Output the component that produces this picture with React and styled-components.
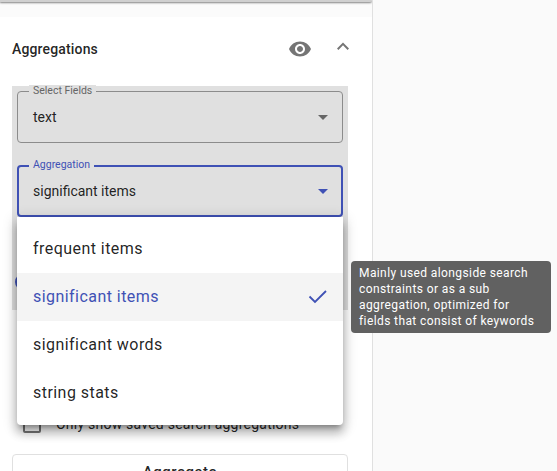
import React from 'react'
import styled, {createGlobalStyle} from 'styled-components'

const GlobalStyle = createGlobalStyle`
  html, body {
    margin: 0;
    height: 100%;
    overflow: hidden;
    background: #fafafa;
    font-family: Roboto, "Liberation Sans", sans-serif;
  }
`;

const Page = styled.div`
  position: relative;
  width: 557px;
  height: 471px;
  overflow: hidden;
  display: flex;
`;

const Sidebar = styled.div`
  width: 373px;
  height: 471px;
  flex: none;
  box-sizing: border-box;
  border-right: 1px solid #e0e0e0;
  background: #fbfbfb;
  overflow: hidden;
`;

const TopCard = styled.div`
  height: 2px;
  background: #d0d0d0;
  border-radius: 0 0 4px 0;
  box-shadow: 0 1px 2px rgba(0, 0, 0, 0.5);
  margin-bottom: 15px;
`;

const Panel = styled.div`
  background: #fff;
  padding: 0 17px 0 12px;
  height: 454px;
`;

const PanelHeader = styled.div`
  display: flex;
  align-items: center;
  height: 64px;
`;

const PanelTitle = styled.h2`
  flex: 1;
  margin: 0;
  font-size: 14px;
  font-weight: 500;
  letter-spacing: 0.15px;
  color: rgba(0, 0, 0, 0.87);
`;

const IconSlot = styled.div`
  display: flex;
  margin-left: ${(props) => props.gap || 0}px;
  color: #757575;
`;

const DisabledArea = styled.div`
  background: #e0e0e0;
  margin-top: 5px;
  height: 224px;
  padding: 5px;
  width: 336px;
  box-sizing: border-box;
`;

const Field = styled.div`
  position: relative;
  height: 52px;
  box-sizing: border-box;
  border: ${(props) => (props.focused ? '2px solid #3f51b5' : '1px solid #8c8c8c')};
  border-radius: 4px;
  margin-bottom: 22px;
  display: flex;
  align-items: center;
  justify-content: space-between;
  padding: 0 ${(props) => (props.focused ? 13 : 14)}px 0 ${(props) => (props.focused ? 14 : 15)}px;
`;

const FieldLabel = styled.span`
  position: absolute;
  top: ${(props) => (props.focused ? -8 : -7)}px;
  left: ${(props) => (props.focused ? 10 : 11)}px;
  padding: 0 4px;
  background: #e0e0e0;
  font-size: 10.5px;
  line-height: 12px;
  color: ${(props) => (props.focused ? '#3f51b5' : '#666')};
`;

const FieldValue = styled.span`
  font-size: 14px;
  color: rgba(0, 0, 0, 0.87);
`;

const Caret = styled.span`
  width: 0;
  height: 0;
  border-left: 5px solid transparent;
  border-right: 5px solid transparent;
  border-top: 5px solid ${(props) => props.color};
`;

const RadioHint = styled.div`
  position: absolute;
  left: 15px;
  top: 273px;
  width: 18px;
  height: 18px;
  border-radius: 50%;
  background: #3f51b5;
`;

const CheckRow = styled.div`
  display: flex;
  align-items: center;
  margin: 105px 0 0 11px;
  height: 18px;
`;

const CheckBox = styled.span`
  width: 14px;
  height: 14px;
  flex: none;
  border: 2px solid #757575;
  border-radius: 2px;
`;

const CheckLabel = styled.span`
  margin-left: 15px;
  font-size: 14px;
  letter-spacing: 0.23px;
  color: rgba(0, 0, 0, 0.87);
`;

const AggregateButton = styled.button`
  display: block;
  width: 336px;
  height: 44px;
  margin-top: 21px;
  padding: 0 0 8px;
  background: #fff;
  border: 1px solid #e0e0e0;
  border-radius: 4px;
  font-family: inherit;
  font-size: 15px;
  font-weight: 500;
  letter-spacing: 0.5px;
  color: rgba(0, 0, 0, 0.87);
`;

const Menu = styled.ul`
  position: absolute;
  left: 17px;
  top: 217px;
  width: 326px;
  margin: 0;
  padding: 8px 0;
  list-style: none;
  background: #fff;
  border-radius: 0 0 4px 4px;
  box-shadow: 0 5px 5px -3px rgba(0, 0, 0, 0.3), 0 8px 10px 1px rgba(0, 0, 0, 0.2), 0 3px 14px 2px rgba(0, 0, 0, 0.16);
`;

const MenuItem = styled.li`
  display: flex;
  align-items: center;
  justify-content: space-between;
  height: 48px;
  box-sizing: border-box;
  padding: 0 14px 2px 16px;
  font-size: 16px;
  letter-spacing: 0.45px;
  background: ${(props) => (props.selected ? '#f4f4f4' : 'transparent')};
  color: ${(props) => (props.selected ? '#3f51b5' : 'rgba(0, 0, 0, 0.87)')};
`;

const Tooltip = styled.div`
  position: absolute;
  left: 351px;
  top: 261px;
  width: 200px;
  height: 72px;
  box-sizing: border-box;
  padding: 4px 8px;
  background: #616161;
  border-radius: 4px;
  color: #fff;
  font-size: 12px;
  line-height: 16px;
  letter-spacing: 0.4px;
`;

const items = ['frequent items', 'significant items', 'significant words', 'string stats']

const App = () => (
  <Page>
    <GlobalStyle/>
    <Sidebar>
      <TopCard/>
      <Panel>
        <PanelHeader>
          <PanelTitle>Aggregations</PanelTitle>
          <IconSlot>
            <svg width="24" height="24" viewBox="0 0 24 24" fill="currentColor">
              <path d="M12 4.5C7 4.5 2.73 7.61 1 12c1.73 4.39 6 7.5 11 7.5s9.27-3.11 11-7.5c-1.73-4.39-6-7.5-11-7.5zM12 17c-2.76 0-5-2.24-5-5s2.24-5 5-5 5 2.24 5 5-2.24 5-5 5zm0-8c-1.66 0-3 1.34-3 3s1.34 3 3 3 3-1.34 3-3-1.34-3-3-3z"/>
            </svg>
          </IconSlot>
          <IconSlot gap={19}>
            <svg width="24" height="24" viewBox="0 0 24 24" fill="currentColor">
              <path d="M12 5.5l-6 6 1.41 1.41L12 8.33l4.59 4.58L18 11.5z"/>
            </svg>
          </IconSlot>
        </PanelHeader>
        <DisabledArea>
          <Field>
            <FieldLabel>Select Fields</FieldLabel>
            <FieldValue>text</FieldValue>
            <Caret color="#666"/>
          </Field>
          <Field focused>
            <FieldLabel focused>Aggregation</FieldLabel>
            <FieldValue>significant items</FieldValue>
            <Caret color="#3f51b5"/>
          </Field>
        </DisabledArea>
        <CheckRow>
          <CheckBox/>
          <CheckLabel>Only show saved search aggregations</CheckLabel>
        </CheckRow>
        <AggregateButton>Aggregate</AggregateButton>
      </Panel>
    </Sidebar>
    <RadioHint/>
    <Menu>
      {items.map((item) => (
        <MenuItem key={item} selected={item === 'significant items'}>
          {item}
          {item === 'significant items' && (
            <svg width="24" height="24" viewBox="0 0 24 24" fill="none" stroke="#3f51b5" strokeWidth="1.8">
              <path d="M4.5 12.5l5.5 5.5L21 7"/>
            </svg>
          )}
        </MenuItem>
      ))}
    </Menu>
    <Tooltip>Mainly used alongside search constraints or as a sub aggregation, optimized for fields that consist of keywords</Tooltip>
  </Page>
)

export default App
